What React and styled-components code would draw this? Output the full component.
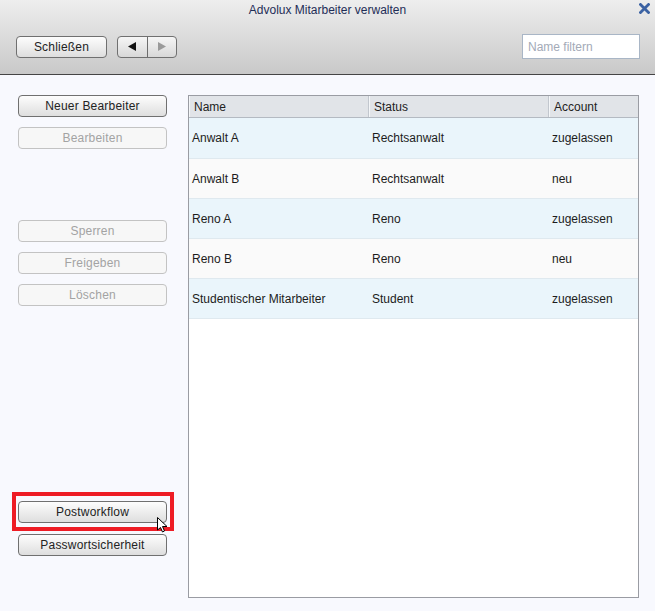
import React from 'react';
import styled, { createGlobalStyle } from 'styled-components';

const GlobalStyle = createGlobalStyle`
  html, body {
    margin: 0;
    padding: 0;
    background: #f8f9fe;
    font-family: "Liberation Sans", Arial, sans-serif;
    font-size: 12px;
  }
`;

const Window = styled.div`
  width: 655px;
  height: 611px;
  display: flex;
  flex-direction: column;
  background: #f8f9fe;
  overflow: hidden;
`;

const Header = styled.header`
  height: 74px;
  background: linear-gradient(#eeeeee, #c9c9c9);
  border-bottom: 1px solid #454545;
  display: flex;
  flex-direction: column;
`;

const TitleBar = styled.div`
  height: 20px;
  position: relative;
  display: flex;
  align-items: center;
  justify-content: center;
`;

const Title = styled.h1`
  margin: 0;
  font-size: 12px;
  font-weight: normal;
  color: #1f2d57;
  line-height: 18px;
`;

const CloseBtn = styled.span`
  position: absolute;
  right: 5px;
  top: 3px;
  width: 11px;
  height: 11px;
  display: flex;
  cursor: pointer;
`;

const Toolbar = styled.div`
  display: flex;
  align-items: center;
  height: 25px;
  margin-top: 14px;
  padding: 0 15px 0 16px;
`;

const Button = styled.button`
  box-sizing: border-box;
  height: 22px;
  width: ${p => p.$w || 149}px;
  padding: 0;
  border-radius: 4px;
  font-family: "Liberation Sans", Arial, sans-serif;
  font-size: 12px;
  letter-spacing: 0.2px;
  border: 1px solid ${p => (p.disabled ? '#c3c3c3' : '#707070')};
  color: ${p => (p.disabled ? '#a3a3a3' : '#232323')};
  background: ${p => (p.disabled ? '#f7f7f7' : 'linear-gradient(#fdfdfd, #dedede)')};
  margin-top: ${p => p.$mt || 0}px;
`;

const NavGroup = styled.div`
  box-sizing: border-box;
  display: flex;
  height: 22px;
  width: 60px;
  margin-left: 10px;
  border: 1px solid #707070;
  border-radius: 4px;
  background: linear-gradient(#f6f6f6, #d8d8d8);
  overflow: hidden;
`;

const NavHalf = styled.span`
  flex: 1;
  display: flex;
  align-items: center;
  justify-content: center;
  & + & {
    border-left: 1px solid #6d6d6d;
  }
`;

const Filter = styled.input`
  box-sizing: border-box;
  margin-left: auto;
  width: 118px;
  height: 25px;
  border: 1px solid #a9b6c6;
  background: #fff;
  padding: 0 5px;
  font-family: "Liberation Sans", Arial, sans-serif;
  font-size: 12px;
  outline: none;
  &::placeholder {
    color: #a3aab7;
  }
`;

const Body = styled.main`
  flex: 1;
  display: flex;
  padding: 20px 16px 13px 18px;
`;

const Sidebar = styled.aside`
  width: 149px;
  display: flex;
  flex-direction: column;
  margin-right: 21px;
`;

const Highlight = styled.div`
  position: relative;
  margin-top: 195px;
`;

const RedFrame = styled.div`
  position: absolute;
  left: -6px;
  top: -9px;
  width: 162px;
  height: 39px;
  box-sizing: border-box;
  border: 4px solid #ee1c25;
  pointer-events: none;
`;

const Pointer = styled.svg`
  position: absolute;
  left: 139px;
  top: 16px;
`;

const Table = styled.div`
  flex: 1;
  box-sizing: border-box;
  border: 1px solid #9a9ca3;
  background: #fff;
  display: flex;
  flex-direction: column;
`;

const Cols = '180px 180px 1fr';

const HeadRow = styled.div`
  display: grid;
  grid-template-columns: ${Cols};
  height: 21px;
  background: #e1e4e8;
  border-bottom: 1px solid #b4bac2;
`;

const HeadCell = styled.div`
  display: flex;
  align-items: center;
  padding-left: 5px;
  color: #222;
  border-right: 1px solid #c2c7ce;
  box-shadow: inset 1px 0 0 #f4f6f8;
  &:last-child {
    border-right: none;
  }
`;

const Row = styled.div`
  box-sizing: border-box;
  display: grid;
  grid-template-columns: ${Cols};
  height: ${p => p.$h || 40}px;
  background: ${p => (p.$alt ? '#fafafa' : '#eaf5fb')};
  border-bottom: 1px solid #dfe9ef;
`;

const Cell = styled.div`
  display: flex;
  align-items: center;
  padding-left: 3px;
  color: #1c1c1c;
`;

const rows = [
  ['Anwalt A', 'Rechtsanwalt', 'zugelassen'],
  ['Anwalt B', 'Rechtsanwalt', 'neu'],
  ['Reno A', 'Reno', 'zugelassen'],
  ['Reno B', 'Reno', 'neu'],
  ['Studentischer Mitarbeiter', 'Student', 'zugelassen'],
];

export default function App() {
  return (
    <>
      <GlobalStyle />
      <Window>
        <Header>
          <TitleBar>
            <Title>Advolux Mitarbeiter verwalten</Title>
            <CloseBtn>
              <svg width="11" height="11" viewBox="0 0 11 11">
                <path d="M1.5 1.5 L9.5 9.5 M9.5 1.5 L1.5 9.5" stroke="#3b62a3" strokeWidth="2.8" strokeLinecap="square" />
              </svg>
            </CloseBtn>
          </TitleBar>
          <Toolbar>
            <Button $w={91}>Schließen</Button>
            <NavGroup>
              <NavHalf>
                <svg width="9" height="9" viewBox="0 0 9 9"><polygon points="8,0 8,9 0,4.5" fill="#111" /></svg>
              </NavHalf>
              <NavHalf>
                <svg width="9" height="9" viewBox="0 0 9 9"><polygon points="1,0 1,9 9,4.5" fill="#9a9a9a" /></svg>
              </NavHalf>
            </NavGroup>
            <Filter placeholder="Name filtern" />
          </Toolbar>
        </Header>
        <Body>
          <Sidebar>
            <Button>Neuer Bearbeiter</Button>
            <Button disabled $mt={10}>Bearbeiten</Button>
            <Button disabled $mt={71}>Sperren</Button>
            <Button disabled $mt={10}>Freigeben</Button>
            <Button disabled $mt={10}>Löschen</Button>
            <Highlight>
              <Button>Postworkflow</Button>
              <RedFrame />
              <Pointer width="12" height="16" viewBox="0 0 12 16">
                <path d="M0.5 0.5 L0.5 13 L3.5 10.5 L5.5 15 L7.5 14 L5.5 9.5 L10 9.5 Z" fill="#fff" stroke="#000" strokeWidth="1" />
              </Pointer>
            </Highlight>
            <Button $mt={11}>Passwortsicherheit</Button>
          </Sidebar>
          <Table>
            <HeadRow>
              <HeadCell>Name</HeadCell>
              <HeadCell>Status</HeadCell>
              <HeadCell>Account</HeadCell>
            </HeadRow>
            {rows.map((r, i) => (
              <Row key={r[0]} $alt={i % 2 === 1} $h={i === 0 ? 41 : 40}>
                {r.map(c => <Cell key={c}>{c}</Cell>)}
              </Row>
            ))}
          </Table>
        </Body>
      </Window>
    </>
  );
}
